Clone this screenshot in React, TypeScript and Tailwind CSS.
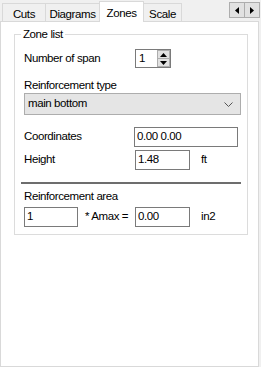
import type { ReactNode } from 'react'

const font = { fontFamily: '"Liberation Sans", Arial, sans-serif' }

function Tab({ label, active, w }: { label: string; active?: boolean; w: string }) {
  if (active) {
    return (
      <div className={`relative z-10 -mb-px flex h-[21px] items-start justify-center border border-b-0 border-[#d9d9d9] bg-white pt-[3px] ${w}`}>
        {label}
      </div>
    )
  }
  return (
    <div className={`flex h-[18px] items-start justify-center border border-b-0 border-[#d9d9d9] bg-[#f0f0f0] pt-[2px] ${w}`}>
      {label}
    </div>
  )
}

function Box({ w, children, className = '' }: { w: string; children?: ReactNode; className?: string }) {
  return (
    <div className={`flex h-[20px] items-center border border-[#7a7a7a] bg-white px-[2px] ${w} ${className}`}>
      {children}
    </div>
  )
}

export default function App() {
  return (
    <div
      className="flex h-[367px] w-[261px] flex-col bg-[#f0f0f0] text-[11.5px] tracking-[-0.4px] text-black"
      style={font}
    >
      <div className="relative flex h-[21px] items-end pl-[2px]">
        <Tab label="Cuts" w="w-[44px] -mr-px" />
        <Tab label="Diagrams" w="w-[55px] -mr-px" />
        <Tab label="Zones" active w="w-[45px] -mr-px" />
        <Tab label="Scale" w="w-[39px]" />
        <div className="absolute right-[1px] top-[2px] flex">
          <div className="flex h-[16px] w-[16px] items-center justify-center border border-[#adadad] bg-[#e1e1e1]">
            <svg width="4" height="7" viewBox="0 0 4 7"><path d="M4 0 L0 3.5 L4 7 Z" fill="#000" /></svg>
          </div>
          <div className="-ml-px flex h-[16px] w-[16px] items-center justify-center border border-[#adadad] bg-[#e1e1e1]">
            <svg width="4" height="7" viewBox="0 0 4 7"><path d="M0 0 L4 3.5 L0 7 Z" fill="#000" /></svg>
          </div>
        </div>
      </div>

      <div className="h-[346px] w-[259px] border border-[#d9d9d9] bg-white pl-[13px] pt-[12px]">
        <div className="relative h-[201px] w-[234px] border border-[#dcdcdc] px-[9px]">
          <div className="absolute left-[6px] top-[-8px] bg-white px-[2px] leading-[14px]">Zone list</div>

          <div className="mt-[14px] flex items-center">
            <div className="w-[111px]">Number of span</div>
            <div className="flex h-[19px] w-[36px] items-stretch border border-[#7a7a7a] bg-white">
              <div className="flex flex-1 items-center pl-[3px]">1</div>
              <div className="flex w-[14px] flex-col border-l border-white">
                <div className="flex flex-1 items-center justify-center border border-[#adadad] bg-[#e1e1e1]">
                  <svg width="7" height="4" viewBox="0 0 7 4"><path d="M0 4 L3.5 0 L7 4 Z" fill="#000" /></svg>
                </div>
                <div className="-mt-px flex flex-1 items-center justify-center border border-[#adadad] bg-[#e1e1e1]">
                  <svg width="7" height="4" viewBox="0 0 7 4"><path d="M0 0 L3.5 4 L7 0 Z" fill="#000" /></svg>
                </div>
              </div>
            </div>
          </div>

          <div className="mt-[10px] leading-[14px]">Reinforcement type</div>
          <div className="mt-[1px] flex h-[22px] w-[217px] items-center justify-between border border-[#adadad] bg-[#e5e5e5] pl-[3px] pr-[7px]">
            <span>main bottom</span>
            <svg width="9" height="5" viewBox="0 0 9 5"><path d="M0.5 0.5 L4.5 4.5 L8.5 0.5" fill="none" stroke="#555" strokeWidth="1" /></svg>
          </div>

          <div className="mt-[12px] flex items-center">
            <div className="w-[111px]">Coordinates</div>
            <Box w="w-[105px]">0.00 0.00</Box>
          </div>
          <div className="mt-[3px] flex items-center">
            <div className="w-[111px]">Height</div>
            <Box w="w-[55px]">1.48</Box>
            <div className="ml-[11px]">ft</div>
          </div>

          <div className="-mx-[3px] mt-[12px] h-[2px] bg-[#6d6d6d]" />

          <div className="mt-[5px] leading-[14px]">Reinforcement area</div>
          <div className="mt-[4px] flex items-center">
            <Box w="w-[54px]">1</Box>
            <div className="ml-[7px] w-[50px]">* Amax =</div>
            <Box w="w-[55px]">0.00</Box>
            <div className="ml-[11px]">in2</div>
          </div>
        </div>
      </div>
    </div>
  )
}
